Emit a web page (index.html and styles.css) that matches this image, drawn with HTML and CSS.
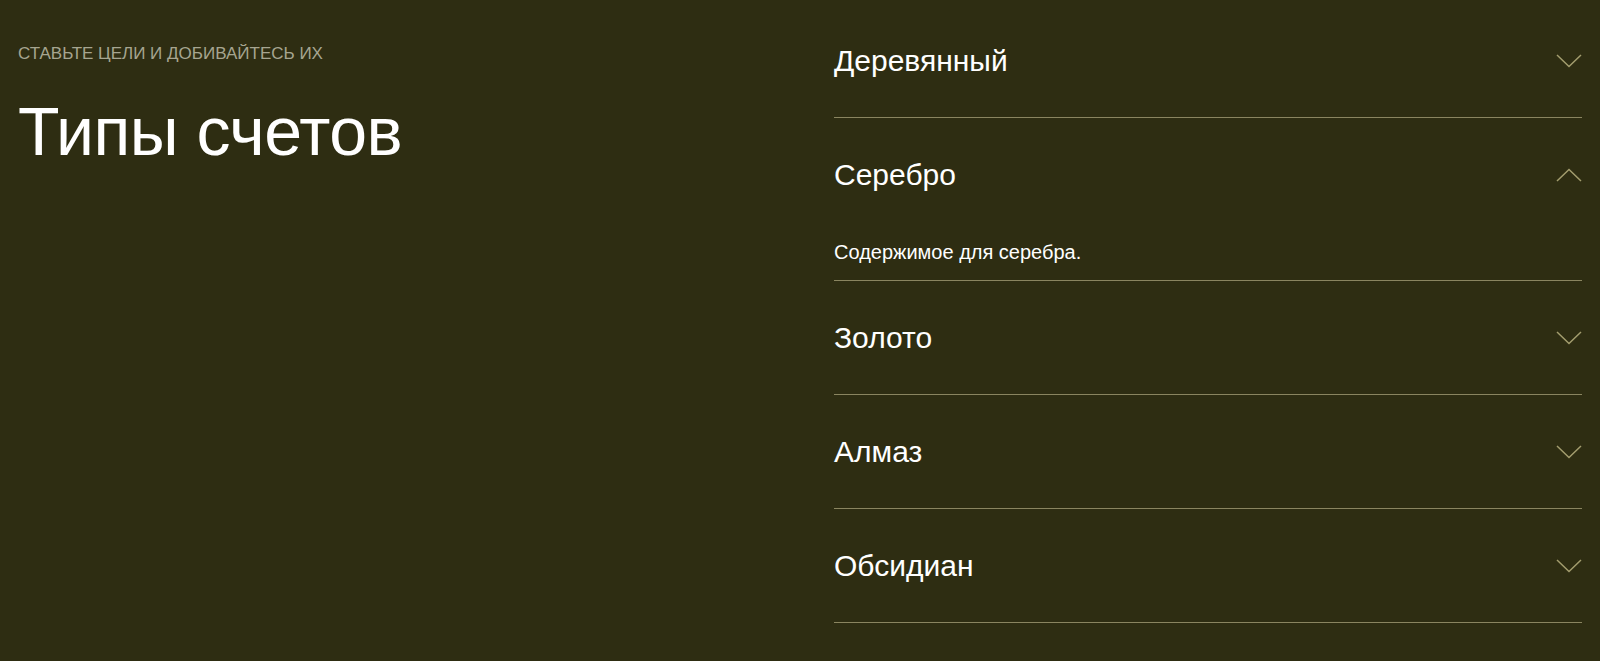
FILE: index.html
```html
<!DOCTYPE html>
<html lang="ru">
<head>
    <meta charset="UTF-8">
    <meta name="viewport" content="width=device-width, initial-scale=1.0">
    <title>Типы счетов</title>
    <link rel="stylesheet" href="styles.css">
</head>
<body>
    <section class="accounts">
        <div class="intro">
            <p class="eyebrow">СТАВЬТЕ ЦЕЛИ И ДОБИВАЙТЕСЬ ИХ</p>
            <h1>Типы счетов</h1>
        </div>

        <div class="accordion">
            <div class="item">
                <button class="item-head">
                    <span>Деревянный</span>
                    <svg class="chevron" viewBox="0 0 26 14"><polyline points="1,1 13,12.5 25,1"/></svg>
                </button>
            </div>
            <div class="item open">
                <button class="item-head">
                    <span>Серебро</span>
                    <svg class="chevron" viewBox="0 0 26 14"><polyline points="1,13 13,1.5 25,13"/></svg>
                </button>
                <div class="item-body">Содержимое для серебра.</div>
            </div>
            <div class="item">
                <button class="item-head">
                    <span>Золото</span>
                    <svg class="chevron" viewBox="0 0 26 14"><polyline points="1,1 13,12.5 25,1"/></svg>
                </button>
            </div>
            <div class="item">
                <button class="item-head">
                    <span>Алмаз</span>
                    <svg class="chevron" viewBox="0 0 26 14"><polyline points="1,1 13,12.5 25,1"/></svg>
                </button>
            </div>
            <div class="item">
                <button class="item-head">
                    <span>Обсидиан</span>
                    <svg class="chevron" viewBox="0 0 26 14"><polyline points="1,1 13,12.5 25,1"/></svg>
                </button>
            </div>
        </div>
    </section>
</body>
</html>
```

FILE: styles.css
```css
* {
    margin: 0;
    padding: 0;
    box-sizing: border-box;
}

body {
    min-height: 100vh;
    background: #2e2d12;
    font-family: "Liberation Sans", Arial, sans-serif;
    color: #fff;
    overflow: hidden;
}

.accounts {
    display: grid;
    grid-template-columns: 1fr 748px;
    padding: 4px 18px 0;
}

.intro {
    padding-top: 40px;
}

.eyebrow {
    font-size: 17px;
    color: #a6a590;
    margin-bottom: 28px;
}

.intro h1 {
    font-size: 68px;
    font-weight: normal;
    line-height: normal;
    letter-spacing: -0.5px;
}

.item {
    border-bottom: 1px solid #8a8560;
}

.item-head {
    width: 100%;
    display: flex;
    justify-content: space-between;
    align-items: center;
    padding: 40px 0;
    background: none;
    border: none;
    color: #fff;
    font-family: inherit;
    font-size: 30px;
    line-height: 33px;
    text-align: left;
    cursor: pointer;
}

.chevron {
    width: 26px;
    height: 14px;
    fill: none;
    stroke: #a39d6e;
    stroke-width: 1.5;
}

.item-body {
    font-size: 20px;
    line-height: 24px;
    padding: 9px 0 16px;
}
```
